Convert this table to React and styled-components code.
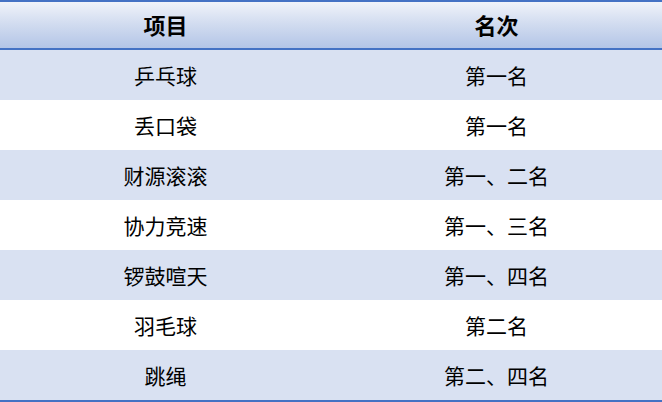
import React from 'react'
import styled, { createGlobalStyle } from 'styled-components'

const GlobalStyle = createGlobalStyle`
  html, body {
    margin: 0;
    padding: 0;
    background: #ffffff;
  }
  body {
    font-family: "Noto Sans CJK SC", "Noto Sans", sans-serif;
    color: #000000;
  }
`

const rows = [
  ['乒乓球', '第一名'],
  ['丢口袋', '第一名'],
  ['财源滚滚', '第一、二名'],
  ['协力竞速', '第一、三名'],
  ['锣鼓喧天', '第一、四名'],
  ['羽毛球', '第二名'],
  ['跳绳', '第二、四名'],
]

const App = () => {
  return (
    <>
      <GlobalStyle />
      <Table>
        <HeadRow>
          <HeadCell>项目</HeadCell>
          <HeadCell>名次</HeadCell>
        </HeadRow>
        {rows.map(([item, rank], i) => (
          <Row key={item} $shaded={i % 2 === 0}>
            <Cell>{item}</Cell>
            <Cell>{rank}</Cell>
          </Row>
        ))}
      </Table>
    </>
  )
}

export default App

const Table = styled.div`
  width: 662px;
  height: 402px;
  box-sizing: border-box;
  border-top: 2px solid #4472c4;
  border-bottom: 2px solid #4472c4;
  display: flex;
  flex-direction: column;
`

const HeadRow = styled.div`
  display: grid;
  grid-template-columns: 1fr 1fr;
  height: 48px;
  box-sizing: border-box;
  border-bottom: 2px solid #4472c4;
  background: linear-gradient(180deg, #f0f3fa 0%, #d3ddf0 45%, #b3c5e7 100%);
`

const HeadCell = styled.div`
  display: flex;
  align-items: center;
  justify-content: center;
  font-size: 22px;
  font-weight: 700;
  padding-bottom: 2px;
`

const Row = styled.div`
  display: grid;
  grid-template-columns: 1fr 1fr;
  height: 50px;
  background: ${(p) => (p.$shaded ? '#d9e1f2' : '#ffffff')};
`

const Cell = styled.div`
  display: flex;
  align-items: center;
  justify-content: center;
  font-size: 21px;
`
